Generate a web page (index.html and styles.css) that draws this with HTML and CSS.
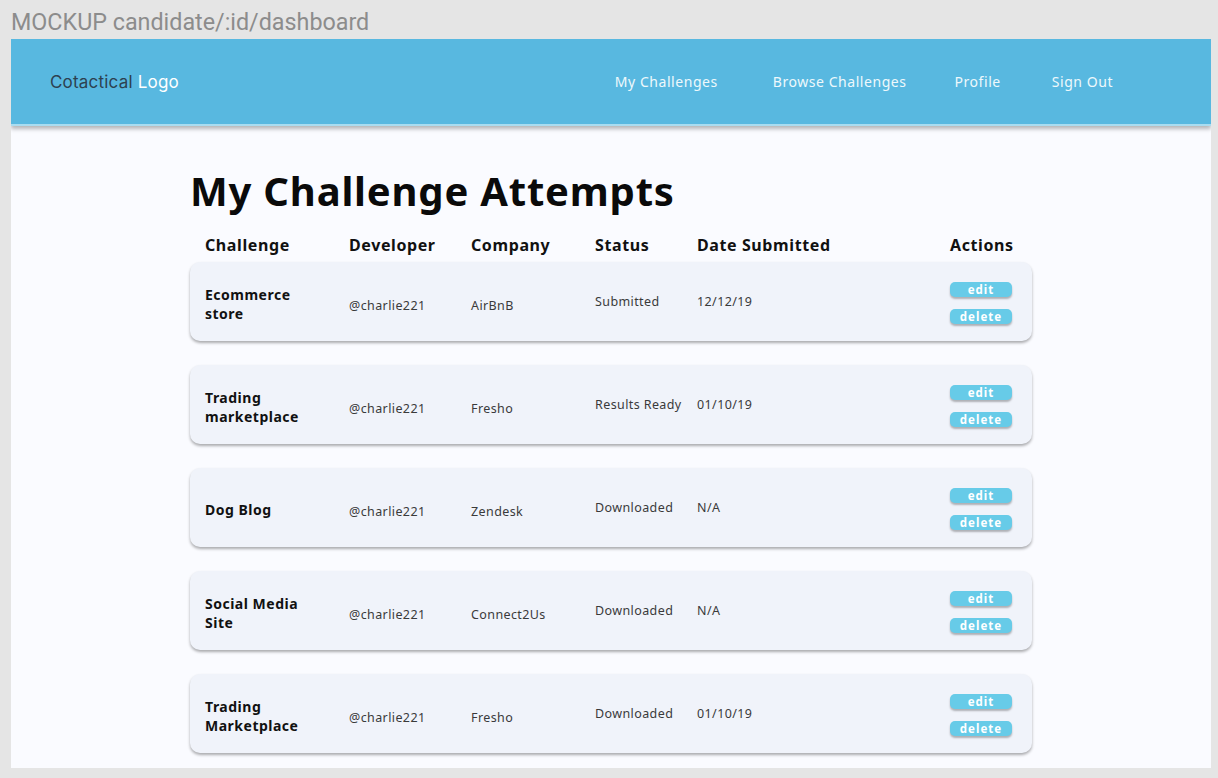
FILE: index.html
```html
<!DOCTYPE html>
<html>
<head>
<meta charset="utf-8">
<link rel="stylesheet" href="styles.css">
</head>
<body>
<div class="mock-title">MOCKUP candidate/:id/dashboard</div>
<div class="frame">
  <header class="topbar">
    <div class="logo"><span class="logo-dark">Cotactical</span> Logo</div>
    <nav class="nav">
      <a class="nav-link nl1">My Challenges</a>
      <a class="nav-link nl2">Browse Challenges</a>
      <a class="nav-link nl3">Profile</a>
      <a class="nav-link nl4">Sign Out</a>
    </nav>
  </header>
  <main class="content">
    <h1 class="page-title">My Challenge Attempts</h1>
    <div class="table-head">
      <div>Challenge</div>
      <div>Developer</div>
      <div>Company</div>
      <div>Status</div>
      <div>Date Submitted</div>
      <div>Actions</div>
    </div>
    <div class="rows">
      <div class="card">
        <div class="c-name">Ecommerce<br>store</div>
        <div class="c-dev">@charlie221</div>
        <div class="c-co">AirBnB</div>
        <div class="c-status">Submitted</div>
        <div class="c-date">12/12/19</div>
        <div class="c-actions"><button class="btn">edit</button><button class="btn">delete</button></div>
      </div>
      <div class="card">
        <div class="c-name">Trading<br>marketplace</div>
        <div class="c-dev">@charlie221</div>
        <div class="c-co">Fresho</div>
        <div class="c-status">Results Ready</div>
        <div class="c-date">01/10/19</div>
        <div class="c-actions"><button class="btn">edit</button><button class="btn">delete</button></div>
      </div>
      <div class="card">
        <div class="c-name">Dog Blog</div>
        <div class="c-dev">@charlie221</div>
        <div class="c-co">Zendesk</div>
        <div class="c-status">Downloaded</div>
        <div class="c-date">N/A</div>
        <div class="c-actions"><button class="btn">edit</button><button class="btn">delete</button></div>
      </div>
      <div class="card">
        <div class="c-name">Social Media<br>Site</div>
        <div class="c-dev">@charlie221</div>
        <div class="c-co">Connect2Us</div>
        <div class="c-status">Downloaded</div>
        <div class="c-date">N/A</div>
        <div class="c-actions"><button class="btn">edit</button><button class="btn">delete</button></div>
      </div>
      <div class="card">
        <div class="c-name">Trading<br>Marketplace</div>
        <div class="c-dev">@charlie221</div>
        <div class="c-co">Fresho</div>
        <div class="c-status">Downloaded</div>
        <div class="c-date">01/10/19</div>
        <div class="c-actions"><button class="btn">edit</button><button class="btn">delete</button></div>
      </div>
    </div>
  </main>
</div>
</body>
</html>
```

FILE: styles.css
```css
* { box-sizing: border-box; }
html, body { margin: 0; padding: 0; }
body {
  background: #e5e5e5;
  width: 1218px;
  height: 778px;
  overflow: hidden;
  font-family: "Noto Sans", "Liberation Sans", sans-serif;
}
.mock-title {
  height: 39px;
  padding-left: 11px;
  padding-top: 9px;
  font-family: Roboto, "Liberation Sans", sans-serif;
  font-size: 23.3px;
  line-height: 27px;
  color: #8c8c8c;
}
.frame {
  margin-left: 11px;
  width: 1200px;
  height: 729px;
  background: #fafbff;
  overflow: hidden;
}
.topbar {
  height: 87px;
  background: #58b8e0;
  border-bottom: 2px solid #a9dcf0;
  box-shadow: 0 3px 4px rgba(0,0,0,0.28);
  display: flex;
  align-items: center;
  padding-left: 39px;
  position: relative;
}
.logo {
  font-family: Inter, "Noto Sans", sans-serif;
  font-size: 17px;
  color: #ffffff;
  letter-spacing: 0.2px;
  padding-top: 1px;
}
.logo-dark { color: #2d4150; }
.nav {
  display: flex;
  margin-left: auto;
  padding-right: 98px;
}
.nav-link {
  font-size: 14px;
  letter-spacing: 0.55px;
  color: #eef8fc;
}
.nl1 { margin-right: 55px; }
.nl2 { margin-right: 48px; }
.nl3 { margin-right: 51px; }
.content {
  padding: 40px 0 0 179px;
}
.page-title {
  margin: 0;
  font-size: 40px;
  line-height: 50px;
  font-weight: 700;
  letter-spacing: 0.8px;
  color: #0a0a0a;
}
.table-head, .card {
  display: grid;
  grid-template-columns: 144px 122px 124px 102px 253px 62px;
  width: 842px;
  padding: 0 20px 0 15px;
}
.table-head {
  margin-top: 16px;
  height: 26px;
  align-items: center;
  font-size: 16px;
  font-weight: 700;
  letter-spacing: 0.6px;
  color: #111;
}
.table-head > div { white-space: nowrap; }
.rows {
  display: flex;
  flex-direction: column;
  gap: 24px;
  margin-top: 4px;
}
.card {
  height: 79px;
  background: #f0f3fa;
  border-radius: 10px;
  box-shadow: 0 2px 3px rgba(0,0,0,0.32);
  align-items: center;
  font-size: 12.5px;
  color: #3a3a3a;
  letter-spacing: 0.4px;
}
.c-name {
  font-size: 14px;
  font-weight: 700;
  line-height: 19px;
  color: #111;
  letter-spacing: 0.5px;
  padding-top: 4px;
}
.c-dev, .c-co { padding-top: 8px; }
.c-actions {
  display: flex;
  flex-direction: column;
  gap: 12px;
  padding-top: 3px;
}
.btn {
  width: 62px;
  height: 15px;
  border: none;
  border-radius: 5px;
  background: #67cbe8;
  color: #fff;
  font-family: "Noto Sans", sans-serif;
  font-size: 11.5px;
  font-weight: 700;
  letter-spacing: 1px;
  line-height: 15px;
  padding: 0;
  box-shadow: 0 2px 2px rgba(0,0,0,0.28);
}
```
